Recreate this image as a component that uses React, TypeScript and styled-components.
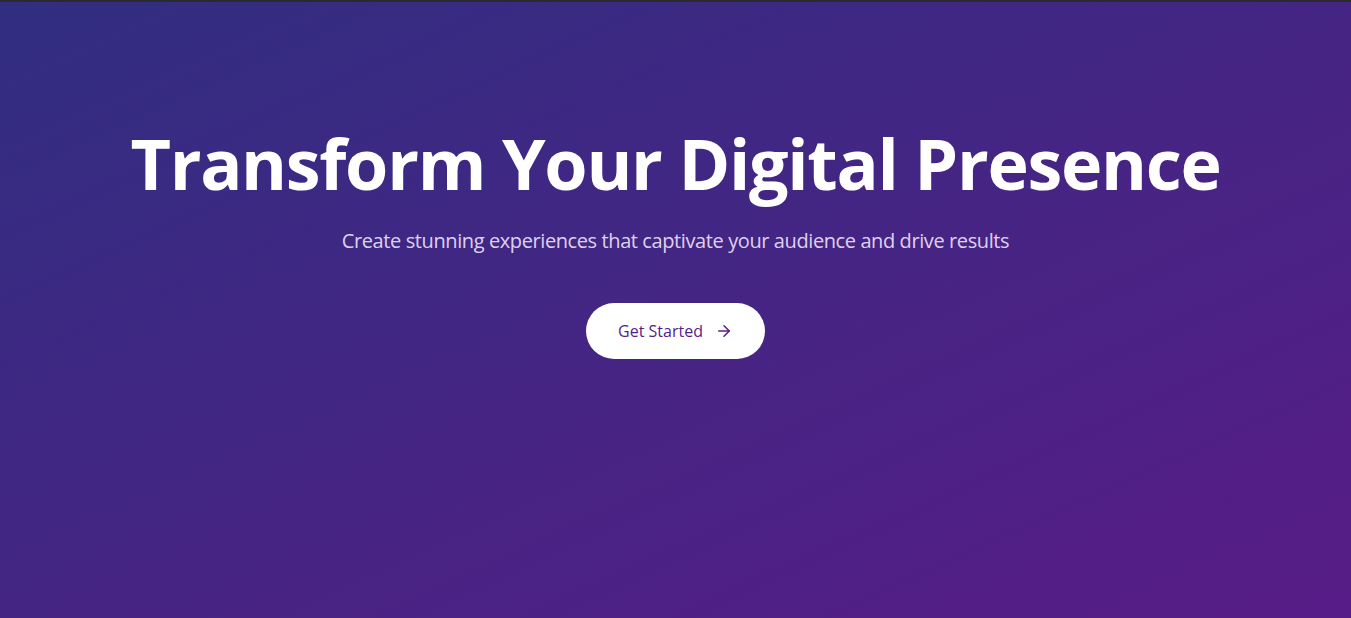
import React from "react";
import styled, { createGlobalStyle } from "styled-components";

const GlobalStyle = createGlobalStyle`
  html, body {
    margin: 0;
    padding: 0;
    background: #2b2b2b;
  }
  * {
    box-sizing: border-box;
  }
`;

const Hero = styled.section`
  min-height: 618px;
  border-top: 2px solid #2b2b2b;
  background: linear-gradient(to bottom right, #312e81, #581c87);
  font-family: "Open Sans", "Noto Sans", sans-serif;
  display: flex;
  flex-direction: column;
  align-items: center;
  padding-top: 126px;
  text-align: center;
`;

const Title = styled.h1`
  margin: 0;
  color: #ffffff;
  font-size: 70px;
  line-height: 1;
  font-weight: 700;
  letter-spacing: -1.3px;
`;

const Subtitle = styled.p`
  margin: 29px 0 0;
  font-size: 20px;
  line-height: 28px;
  letter-spacing: -0.4px;
  color: rgba(243, 232, 255, 0.9);
`;

const CtaButton = styled.button`
  margin-top: 48px;
  display: inline-flex;
  align-items: center;
  gap: 12px;
  height: 56px;
  padding: 0 32px;
  border: none;
  border-radius: 9999px;
  background: #ffffff;
  color: #581c87;
  font-family: inherit;
  font-size: 16px;
  font-weight: 500;
  cursor: pointer;
`;

const Arrow = () => (
  <svg width="18" height="18" viewBox="0 0 24 24" fill="none" stroke="currentColor" strokeWidth="2" strokeLinecap="round" strokeLinejoin="round">
    <path d="M5 12h14" />
    <path d="m12 5 7 7-7 7" />
  </svg>
);

export default function App() {
  return (
    <>
      <GlobalStyle />
      <Hero>
        <Title>Transform Your Digital Presence</Title>
        <Subtitle>Create stunning experiences that captivate your audience and drive results</Subtitle>
        <CtaButton>
          Get Started
          <Arrow />
        </CtaButton>
      </Hero>
    </>
  );
}
